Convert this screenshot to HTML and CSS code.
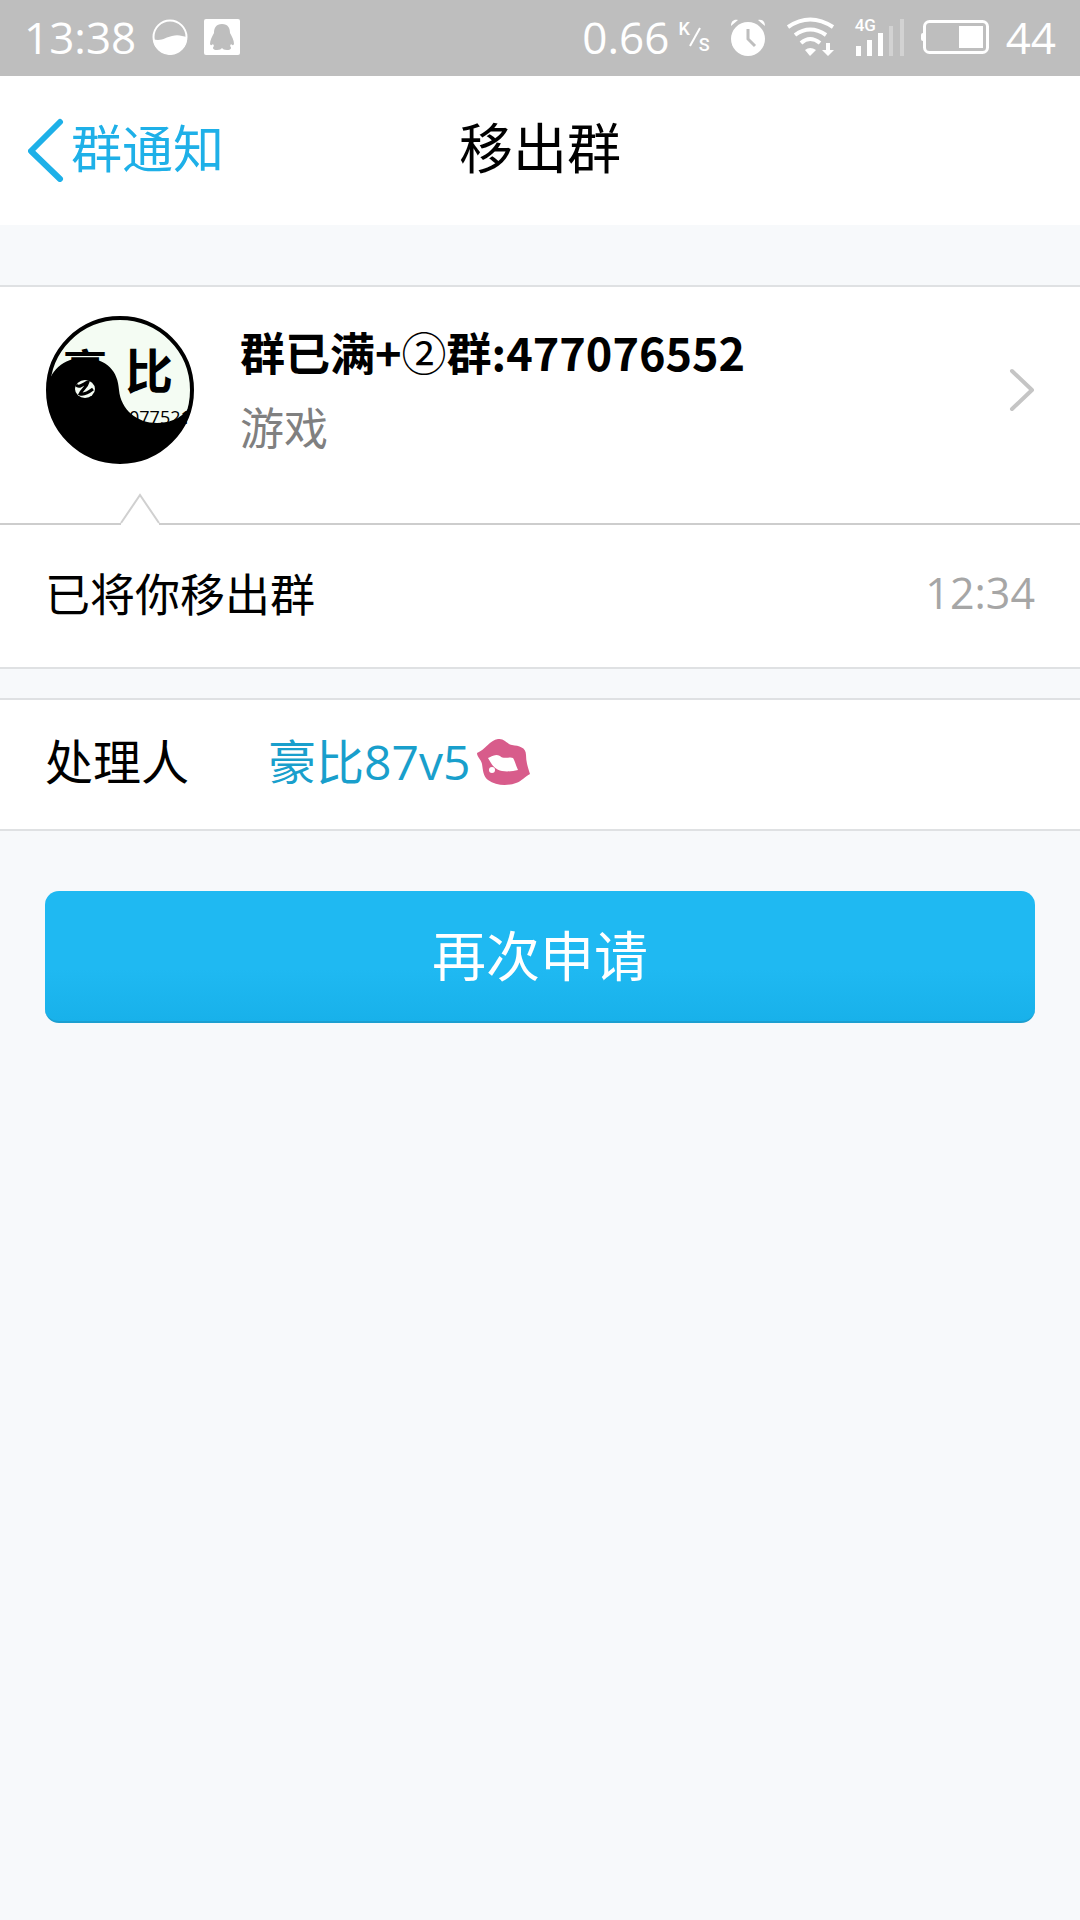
FILE: index.html
```html
<!DOCTYPE html>
<html lang="zh-CN">
<head>
<meta charset="utf-8">
<meta name="viewport" content="width=device-width, initial-scale=1">
<title>移出群</title>
<link rel="stylesheet" href="styles.css">
</head>
<body>
<div class="status">
  <div class="status-side status-left">
    <span>13:38</span>
    <svg width="36" height="36" viewBox="0 0 36 36" aria-hidden="true">
      <circle cx="18" cy="18" r="16.5" fill="none" stroke="#fff" stroke-width="2"/>
      <path d="M1 20C9 23 14 18 20 17C26 15 30 17 35 18A17 17 0 0 1 1 20Z" fill="#fff"/>
    </svg>
    <svg width="36" height="36" viewBox="0 0 36 36" aria-hidden="true">
      <rect width="36" height="36" rx="2" fill="#fff"/>
      <path d="M18 5C12 5 10 9 10 14C8 18 6 21 6 25C7 27 8 26 9 25L10 27C8 29 9 31 13 31C16 31 17 30 18 29C19 30 20 31 23 31C27 31 28 29 26 27L27 25C28 26 29 27 30 25C30 21 28 18 26 14C26 9 24 5 18 5Z" fill="#bebebe"/>
    </svg>
  </div>
  <div class="status-side status-right">
    <span>0.66</span>
    <span class="rate"><span>K</span><svg width="12" height="20" viewBox="0 0 12 20" aria-hidden="true"><path d="M1 19L11 1" stroke="#fff" stroke-width="2"/></svg><span class="rate-unit">S</span></span>
    <svg width="36" height="38" viewBox="0 0 36 38" aria-hidden="true">
      <circle cx="18" cy="21" r="17" fill="#fff"/>
      <path d="M1 8C1 3 4 1 8 2Z M28 2C32 1 35 3 35 8Z" fill="#fff"/>
      <path d="M18 11V21L25 28" fill="none" stroke="#bebebe" stroke-width="3"/>
    </svg>
    <svg class="wifi" width="48" height="40" viewBox="0 0 48 40" aria-hidden="true">
      <g fill="none" stroke="#fff" stroke-width="4">
        <path d="M1 10Q23-5 46 10"/><path d="M8 18Q23 7 39 18"/><path d="M14 26Q23 18 33 26"/>
      </g>
      <path d="M18 33Q23 29 29 33L23 39Z" fill="#fff"/>
      <path d="M39 26h4v7h4l-6 6-6-6h4Z" fill="#fff"/>
    </svg>
    <span class="signal">
      <span class="signal-type">4G</span>
      <svg width="50" height="37" viewBox="0 0 50 37" aria-hidden="true">
        <path d="M1 27h5v10H1zM12 21h5v16h-5zM23 14h5v23h-5z" fill="#fff"/>
        <path d="M34 7h4v30h-4zM45 0h4v37h-4z" fill="#d2d2d2"/>
      </svg>
    </span>
    <svg class="battery" width="68" height="34" viewBox="0 0 68 34" aria-hidden="true">
      <rect x="3.500" y="1.500" width="63" height="31" rx="5" fill="none" stroke="#fff" stroke-width="3"/>
      <rect x="0" y="13" width="4" height="8" rx="2" fill="#fff"/>
      <rect x="38" y="6" width="24" height="22" fill="#fff"/>
    </svg>
    <span>44</span>
  </div>
</div>

<header class="nav">
  <a class="back" href="#">
    <svg width="38" height="68" viewBox="0 0 38 68" aria-hidden="true"><path d="M32 8L3 37L32 65" fill="none" stroke="#1eb0e8" stroke-width="6" stroke-linecap="round" stroke-linejoin="round"/></svg>
    <span>群通知</span>
  </a>
  <h1 class="title">移出群</h1>
</header>

<main>
  <section class="panel">
    <a class="group" href="#">
      <svg width="150" height="150" viewBox="0 0 150 150" role="img" aria-label="群头像">
        <circle cx="75" cy="75" r="73" fill="#f4fcf3"/>
        <text class="avatar-word" x="18" y="72" font-size="44">豪</text>
        <text class="avatar-word" x="80" y="74" font-size="48">比</text>
        <text class="avatar-number" x="84" y="109">077521</text>
        <path d="M2 75C4 55 20 42 40 43C62 44 73 56 74 75C76 95 92 108 112 108C128 108 140 101 147 88A73 73 0 0 1 75 148A73 73 0 0 1 2 75Z" fill="#000"/>
        <circle cx="75" cy="75" r="72" fill="none" stroke="#000" stroke-width="4"/>
        <ellipse cx="40" cy="74" rx="10" ry="9" fill="#f4fcf3"/>
        <path d="M31 70C35 74 39 68 43 67C42 72 37 74 35 79C40 80 44 77 48 74" fill="none" stroke="#000" stroke-width="3"/>
      </svg>
      <div class="group-text">
        <h2 class="group-name">群已满+<span class="circled">②</span>群:477076552</h2>
        <p class="group-kind">游戏</p>
      </div>
      <svg width="26" height="44" viewBox="0 0 26 44" aria-hidden="true"><path d="M3 3L23 22L3 41" fill="none" stroke="#c5c5c5" stroke-width="4" stroke-linecap="round" stroke-linejoin="round"/></svg>
    </a>
    <div class="notice">
      <svg class="pointer" width="40" height="32" viewBox="0 0 40 32" aria-hidden="true"><path d="M1 32V30L20 2L39 30V32Z" fill="#fff"/><path d="M1 30L20 2L39 30" fill="none" stroke="#d0d0d0" stroke-width="2"/></svg>
      <p>已将你移出群</p>
      <time class="time">12:34</time>
    </div>
  </section>

  <section class="panel handler">
    <span>处理人</span>
    <a class="person" href="#">豪比87v5<svg width="54" height="48" viewBox="0 0 54 48" role="img" aria-label="红唇">
      <path fill-rule="evenodd" d="M1 15C9 12 14 2 22 1C28 0 31 6 36 7C43 8 50 9 50 17C50 24 52 30 54 36C48 39 46 43 40 45C32 48 20 48 12 42C7 38 7 32 6 26C5 21 1 19 1 15ZM12 20C15 19 19 15 24 18C28 22 34 18 37 20C39 23 40 28 42 32C37 33 32 34 26 33C20 32 17 28 15 25Z" fill="#d85c8b"/>
      <circle cx="16" cy="32" r="3" fill="#fff"/>
    </svg></a>
  </section>

  <button class="apply" type="button">再次申请</button>
</main>
</body>
</html>
```
FILE: styles.css
```css
* { box-sizing: border-box; }

body {
  margin: 0;
  background: #f7f9fb;
  color: #000;
  font-family: "Open Sans", "Noto Sans CJK SC", sans-serif;
  font-size: 45px;
  line-height: 60px;
}

h1, h2, p { margin: 0; }
a { color: inherit; text-decoration: none; }
svg { flex: none; display: block; }

.status {
  display: flex;
  justify-content: space-between;
  align-items: center;
  height: 76px;
  padding: 0 24px 2px;
  background: #bebebe;
  color: #fff;
  font-size: 44px;
}
.status-side { display: flex; align-items: center; }
.status-left { gap: 16px; }
.rate {
  display: flex;
  margin: 0 20px 0 9px;
  font-family: Roboto, sans-serif;
  font-size: 18px;
  font-weight: 500;
  line-height: 20px;
}
.rate svg { margin: 8px -2px 0 -1px; }
.rate-unit { padding-top: 16px; }
.wifi { margin: 0 20px 0 21px; }
.signal { position: relative; }
.signal-type {
  position: absolute;
  left: 0;
  top: 0;
  font-family: Roboto, sans-serif;
  font-size: 17px;
  font-weight: 500;
  line-height: 12px;
}
.battery { margin: 0 17px 0 16px; }

.nav {
  display: grid;
  grid-template-columns: 1fr auto 1fr;
  align-items: center;
  padding: 36px 28px 41px;
  background: #fff;
}
.back {
  display: flex;
  align-items: center;
  gap: 5px;
  color: #1eb0e8;
  font-size: 51px;
  line-height: 72px;
}
.title { font-size: 54px; font-weight: 400; line-height: 72px; }

.panel {
  margin-top: 60px;
  background: #fff;
  border-top: 2px solid #dfe1e3;
  border-bottom: 2px solid #dfe1e3;
}
.group {
  display: flex;
  align-items: center;
  padding: 27px 45px 57px;
}
.avatar-word { font-family: "Noto Sans CJK SC", sans-serif; font-weight: 700; }
.avatar-number { font-family: "Open Sans", sans-serif; font-size: 18px; }
.group-text { flex: 1; padding-left: 45px; }
.group-name {
  font-family: "Noto Sans CJK SC", sans-serif;
  font-size: 45px;
  font-weight: 700;
  line-height: 76px;
}
.circled { font-weight: 400; }
.group-kind { color: #808080; font-size: 44px; line-height: 76px; }

.notice {
  position: relative;
  display: flex;
  justify-content: space-between;
  padding: 40px 45px 42px;
  border-top: 2px solid #cdcdcd;
}
.pointer { position: absolute; left: 120px; top: -32px; }
.time { color: #a6a6a6; font-size: 43px; line-height: 56px; }

.handler {
  display: flex;
  gap: 79px;
  margin-top: 29px;
  padding: 32px 45px 37px;
  font-size: 48px;
}
.person { display: flex; align-items: center; gap: 6px; color: #199fcc; }

.apply {
  display: block;
  width: calc(100% - 90px);
  margin: 60px 45px;
  padding: 30px 0;
  border: 0;
  border-bottom: 2px solid #1c9fd0;
  border-radius: 14px;
  background: linear-gradient(#1fb9f2 60%, #18b1ea);
  color: #fff;
  font-family: inherit;
  font-size: 54px;
  line-height: 70px;
}
```
